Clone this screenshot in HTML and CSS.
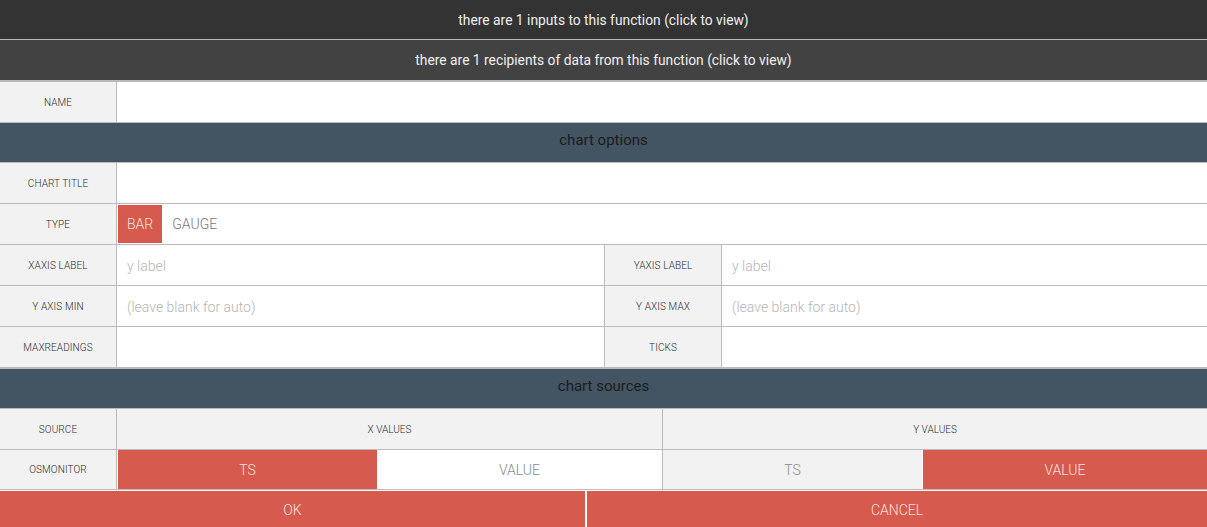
FILE: index.html
```html
<!DOCTYPE html>
<html>
<head>
<meta charset="utf-8">
<link rel="stylesheet" href="styles.css">
</head>
<body>
<div class="panel">
  <div class="bar bar-inputs">there are 1 inputs to this function (click to view)</div>
  <div class="bar bar-recipients">there are 1 recipients of data from this function (click to view)</div>

  <div class="row">
    <div class="label">NAME</div>
    <div class="field"><input class="input" type="text"></div>
  </div>

  <div class="section">chart options</div>

  <div class="row">
    <div class="label">CHART TITLE</div>
    <div class="field"><input class="input" type="text"></div>
  </div>
  <div class="row">
    <div class="label">TYPE</div>
    <div class="field type-field">
      <span class="choice active">BAR</span>
      <span class="choice">GAUGE</span>
    </div>
  </div>
  <div class="row">
    <div class="half half-left">
      <div class="label">XAXIS LABEL</div>
      <div class="field"><input class="input" type="text" placeholder="y label"></div>
    </div>
    <div class="half">
      <div class="label">YAXIS LABEL</div>
      <div class="field"><input class="input" type="text" placeholder="y label"></div>
    </div>
  </div>
  <div class="row">
    <div class="half half-left">
      <div class="label">Y AXIS MIN</div>
      <div class="field"><input class="input" type="text" placeholder="(leave blank for auto)"></div>
    </div>
    <div class="half">
      <div class="label">Y AXIS MAX</div>
      <div class="field"><input class="input" type="text" placeholder="(leave blank for auto)"></div>
    </div>
  </div>
  <div class="row row-thick">
    <div class="half half-left">
      <div class="label">MAXREADINGS</div>
      <div class="field"><input class="input" type="text"></div>
    </div>
    <div class="half">
      <div class="label">TICKS</div>
      <div class="field"><input class="input" type="text"></div>
    </div>
  </div>

  <div class="section">chart sources</div>

  <div class="row">
    <div class="label">SOURCE</div>
    <div class="src-head src-x">X VALUES</div>
    <div class="src-head">Y VALUES</div>
  </div>
  <div class="row row-short">
    <div class="label">OSMONITOR</div>
    <div class="opts opts-x">
      <span class="opt opt-first on">TS</span>
      <span class="opt">VALUE</span>
    </div>
    <div class="opts opts-y">
      <span class="opt opt-first">TS</span>
      <span class="opt on">VALUE</span>
    </div>
  </div>

  <div class="actions">
    <button class="btn btn-ok">OK</button>
    <button class="btn btn-cancel">CANCEL</button>
  </div>
</div>
</body>
</html>
```

FILE: styles.css
```css
* { box-sizing: border-box; }

html, body {
  margin: 0;
  padding: 0;
  background: #ffffff;
  font-family: Roboto, "Liberation Sans", sans-serif;
  overflow: hidden;
}

.panel {
  width: 1207px;
  height: 527px;
  display: flex;
  flex-direction: column;
}

.bar {
  display: flex;
  align-items: center;
  justify-content: center;
  color: #f0f0f0;
  font-size: 13.8px;
  font-weight: 400;
  cursor: pointer;
}

.bar-inputs {
  height: 40px;
  background: #333333;
  border-bottom: 1px solid #b9b9b9;
}

.bar-recipients {
  height: 42px;
  background: #424242;
  border-bottom: 2px solid #b9b9b9;
}

.row {
  height: 41px;
  flex: 0 0 auto;
  display: flex;
  border-bottom: 1px solid #bbbbbb;
}

.row-thick {
  height: 42px;
  border-bottom: 2px solid #b9b9b9;
}

.row-short {
  height: 40px;
}

.label {
  width: 117px;
  flex: 0 0 117px;
  background: #f2f2f2;
  border-right: 1px solid #bbbbbb;
  display: flex;
  align-items: center;
  justify-content: center;
  font-size: 10px;
  font-weight: 300;
  color: #2e2e2e;
  letter-spacing: 0.1px;
}

.field {
  flex: 1;
  display: flex;
  align-items: center;
  min-width: 0;
}

.input {
  width: 100%;
  height: 100%;
  border: none;
  outline: none;
  background: transparent;
  padding: 1px 10px 0;
  font-family: Roboto, "Liberation Sans", sans-serif;
  font-size: 14px;
  font-weight: 300;
  color: #333;
}

.input::placeholder {
  color: #b5b5b5;
  font-weight: 300;
}

.section {
  height: 40px;
  flex: 0 0 auto;
  background: #435563;
  border-bottom: 1px solid #bbbbbb;
  display: flex;
  align-items: center;
  justify-content: center;
  padding-bottom: 6px;
  font-size: 15px;
  color: #1c1c1c;
}

.type-field {
  padding: 1px;
}

.choice {
  height: 100%;
  display: flex;
  align-items: center;
  padding: 0 10px;
  font-size: 14px;
  font-weight: 300;
  color: #777777;
}

.choice.active {
  background: #d65a4e;
  color: #fbe3df;
  padding: 0 9px;
}

.half {
  flex: 1;
  display: flex;
  min-width: 0;
}

.half-left {
  flex: 0 0 605px;
  border-right: 1px solid #bbbbbb;
}

.src-head {
  flex: 1;
  background: #f2f2f2;
  display: flex;
  align-items: center;
  justify-content: center;
  font-size: 10px;
  font-weight: 300;
  color: #2e2e2e;
}

.src-x {
  flex: 0 0 546px;
  border-right: 1px solid #bbbbbb;
}

.opts {
  flex: 1;
  display: flex;
}

.opts-x {
  flex: 0 0 546px;
  background: #ffffff;
  border-right: 1px solid #bbbbbb;
  padding: 0 0 0 1px;
}

.opts-y {
  background: #f2f2f2;
}

.opt {
  flex: 1;
  display: flex;
  align-items: center;
  justify-content: center;
  font-size: 14px;
  font-weight: 300;
  color: #8a8a8a;
}

.opt-first {
  flex: 0 0 259px;
}

.opt.on {
  background: #d65a4e;
  color: #fbe3df;
}

.opts-y .opt.on {
  border-left: 1px solid #ffffff;
}

.actions {
  flex: 1;
  display: flex;
  gap: 2px;
  padding-top: 1px;
  background: #ffffff;
}

.btn {
  border: none;
  background: #d65a4e;
  color: #fbe3df;
  font-family: Roboto, "Liberation Sans", sans-serif;
  font-size: 14px;
  font-weight: 300;
  cursor: pointer;
  padding: 2px 0 0;
}

.btn-ok {
  flex: 0 0 585px;
}

.btn-cancel {
  flex: 1;
}
```
